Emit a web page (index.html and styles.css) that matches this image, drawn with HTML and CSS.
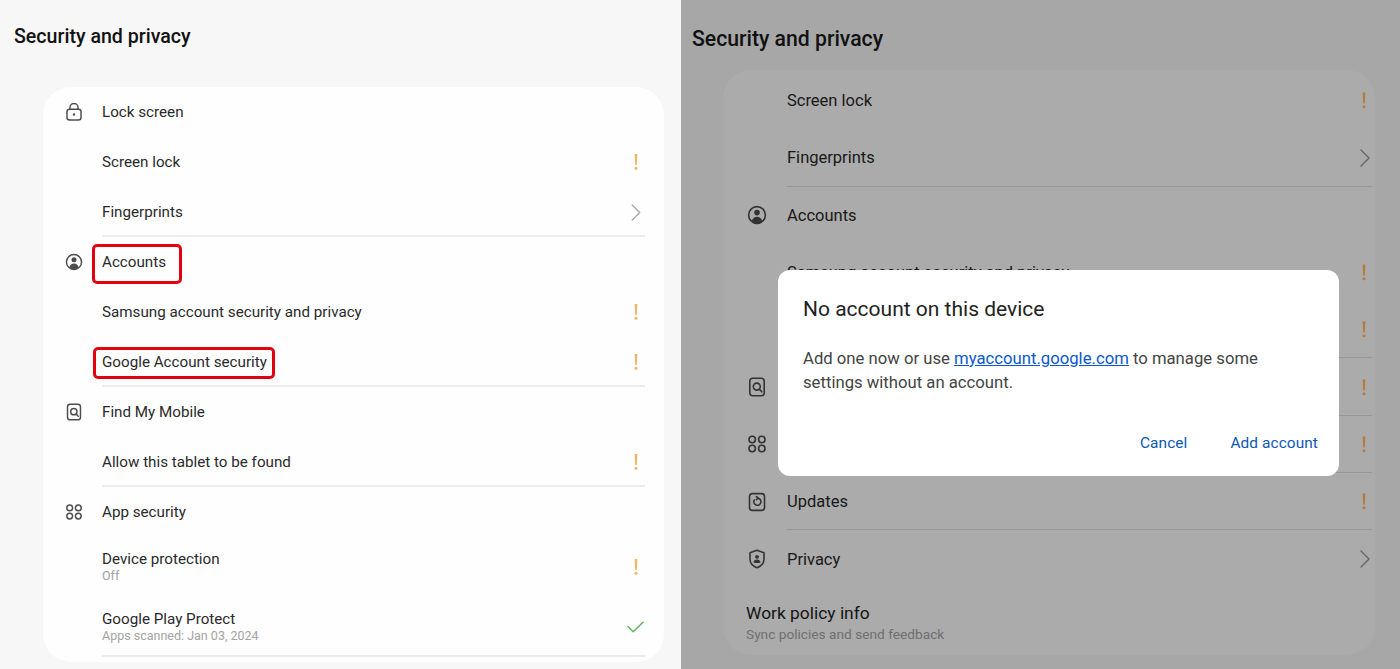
FILE: index.html
```html
<!DOCTYPE html>
<html lang="en">
  <head>
    <meta charset="UTF-8">
    <meta name="viewport" content="width=device-width, initial-scale=1.0">
    <title>Security and privacy</title>
    <link rel="stylesheet" href="styles.css">
  </head>
  <body>
    <svg class="defs" aria-hidden="true">
      <symbol id="i-lock" viewBox="0 0 20 20">
        <path d="M5.500 7V5a4.500 4.500 0 0 1 9 0v2"/>
        <rect x="2.200" y="7" width="15.600" height="11.800" rx="2.800"/>
        <circle class="fill" cx="10" cy="12.800" r="1.300"/>
      </symbol>
      <symbol id="i-account" viewBox="0 0 20 20">
        <circle cx="10" cy="10" r="8.400"/>
        <circle class="fill" cx="10" cy="7.600" r="2.800"/>
        <path class="fill" d="M4.800 16.400c.6-3 2.700-4.600 5.200-4.600s4.600 1.600 5.200 4.600a8.400 8.400 0 0 1-10.400 0z"/>
      </symbol>
      <symbol id="i-find" viewBox="0 0 20 20">
        <rect x="2.800" y="1.300" width="14.400" height="17.400" rx="3"/>
        <circle cx="9.800" cy="9.600" r="3.500"/>
        <path d="M12.400 12.200l2.400 2.600"/>
      </symbol>
      <symbol id="i-apps" viewBox="0 0 20 20">
        <circle cx="5.200" cy="5.500" r="3.200"/>
        <circle cx="14.800" cy="5.500" r="3.200"/>
        <circle cx="5.200" cy="14.500" r="3.200"/>
        <circle cx="14.800" cy="14.500" r="3.200"/>
      </symbol>
      <symbol id="i-update" viewBox="0 0 20 20">
        <rect x="2.500" y="1.600" width="15" height="16.800" rx="3"/>
        <path d="M7.200 8a3.600 3.600 0 1 0 3.400-1.900"/>
        <path d="M9.400 4.600l1.700 1.500-1.700 1.500"/>
      </symbol>
      <symbol id="i-privacy" viewBox="0 0 20 20">
        <path d="M10 1.300l7 2.500v6.400c0 3.900-3 6.900-7 8.500-4-1.600-7-4.600-7-8.500V3.800z"/>
        <circle class="fill" cx="10" cy="7.800" r="1.900"/>
        <path class="fill" d="M6.500 13.400c.3-1.800 1.800-2.800 3.500-2.800s3.200 1 3.500 2.800c-1 .7-6 .7-7 0z"/>
      </symbol>
      <symbol id="i-warn" viewBox="0 0 6 16">
        <path class="fill" d="M1.700 0h2.600l-.5 11H2.200z"/>
        <circle class="fill" cx="3" cy="14.300" r="1.500"/>
      </symbol>
      <symbol id="i-chevron" viewBox="0 0 10 18">
        <path d="M1 1l8 8-8 8"/>
      </symbol>
      <symbol id="i-check" viewBox="0 0 18 12">
        <path d="M1 5.500l5.500 5.500L17 1"/>
      </symbol>
    </svg>

    <div class="screen">
      <section class="panel light">
        <h1 class="title">Security and privacy</h1>
        <div class="card">
          <div class="row"><svg class="icon"><use href="#i-lock"/></svg><span class="label">Lock screen</span></div>
          <div class="row"><span class="label">Screen lock</span><svg class="warn"><use href="#i-warn"/></svg></div>
          <div class="row line"><span class="label">Fingerprints</span><svg class="chevron"><use href="#i-chevron"/></svg></div>
          <div class="row"><svg class="icon"><use href="#i-account"/></svg><span class="label">Accounts<i class="mark mark-accounts"></i></span></div>
          <div class="row"><span class="label">Samsung account security and privacy</span><svg class="warn"><use href="#i-warn"/></svg></div>
          <div class="row line"><span class="label">Google Account security<i class="mark mark-google"></i></span><svg class="warn"><use href="#i-warn"/></svg></div>
          <div class="row"><svg class="icon"><use href="#i-find"/></svg><span class="label">Find My Mobile</span></div>
          <div class="row line"><span class="label">Allow this tablet to be found</span><svg class="warn"><use href="#i-warn"/></svg></div>
          <div class="row"><svg class="icon"><use href="#i-apps"/></svg><span class="label">App security</span></div>
          <div class="row tall">
            <div class="label">Device protection<small class="sub">Off</small></div>
            <svg class="warn"><use href="#i-warn"/></svg>
          </div>
          <div class="row tall line">
            <div class="label">Google Play Protect<small class="sub">Apps scanned: Jan 03, 2024</small></div>
            <svg class="check"><use href="#i-check"/></svg>
          </div>
        </div>
      </section>

      <section class="panel dim">
        <h1 class="title">Security and privacy</h1>
        <div class="card">
          <div class="row"><span class="label">Screen lock</span><svg class="warn"><use href="#i-warn"/></svg></div>
          <div class="row line"><span class="label">Fingerprints</span><svg class="chevron"><use href="#i-chevron"/></svg></div>
          <div class="row"><svg class="icon"><use href="#i-account"/></svg><span class="label">Accounts</span></div>
          <div class="row"><span class="label">Samsung account security and privacy</span><svg class="warn"><use href="#i-warn"/></svg></div>
          <div class="row line"><span class="label">Google Account security</span><svg class="warn"><use href="#i-warn"/></svg></div>
          <div class="row line"><svg class="icon"><use href="#i-find"/></svg><span class="label">Find My Mobile</span><svg class="warn"><use href="#i-warn"/></svg></div>
          <div class="row line"><svg class="icon"><use href="#i-apps"/></svg><span class="label">App security</span><svg class="warn"><use href="#i-warn"/></svg></div>
          <div class="row line"><svg class="icon"><use href="#i-update"/></svg><span class="label">Updates</span><svg class="warn"><use href="#i-warn"/></svg></div>
          <div class="row"><svg class="icon"><use href="#i-privacy"/></svg><span class="label">Privacy</span><svg class="chevron"><use href="#i-chevron"/></svg></div>
          <div class="policy">
            <div class="policyname">Work policy info</div>
            <small class="sub">Sync policies and send feedback</small>
          </div>
        </div>

        <div class="dialog">
          <h2 class="dialogtitle">No account on this device</h2>
          <p class="dialogtext">Add one now or use <a class="link" href="#">myaccount.google.com</a> to manage some settings without an account.</p>
          <div class="actions">
            <span class="action">Cancel</span>
            <span class="action">Add account</span>
          </div>
        </div>
      </section>
    </div>
  </body>
</html>
```

FILE: styles.css
```css
* {
  box-sizing: border-box;
}
html, body {
  height: 100%;
}
body {
  margin: 0;
  overflow: hidden;
  font-family: Roboto, "Liberation Sans", sans-serif;
  color: #1c1c1c;
}
.defs {
  display: none;
}
.screen {
  display: flex;
  height: 669px;
}
.panel {
  position: relative;
  overflow: hidden;
}
.title {
  margin: 0;
  font-weight: 500;
  color: #111;
}
.card {
  display: flex;
  flex-direction: column;
}
.row {
  position: relative;
  display: flex;
  align-items: center;
  flex: none;
}
.row .icon {
  position: absolute;
  fill: none;
  stroke-linecap: round;
  stroke-linejoin: round;
}
.row .warn, .row .chevron, .row .check {
  margin-left: auto;
  fill: none;
  stroke-linecap: round;
  stroke-linejoin: round;
}
.fill {
  fill: currentColor;
  stroke: none;
}
.label {
  position: relative;
}
.sub {
  display: block;
}
.row.line::after {
  content: "";
  position: absolute;
  bottom: 0;
  height: 2px;
}

/* left half */
.light {
  width: 681px;
  background-color: #f7f7f7;
  padding: 25px 0 0 14px;
}
.light .title {
  font-size: 19.6px;
  line-height: 23px;
}
.light .card {
  width: 621px;
  height: 575px;
  margin: 39px 0 0 29px;
  padding: 0 19px 0 59px;
  border-radius: 28px;
  background-color: #fefefe;
}
.light .row {
  height: 50px;
  font-size: 15.2px;
  line-height: 18px;
  color: #2a2a2a;
}
.light .row.tall {
  height: 60px;
}
.light .row.line::after {
  left: 0;
  right: 0;
  background-color: #ececec;
}
.light .icon {
  left: -37px;
  width: 18px;
  height: 18px;
  stroke: #4c4c4c;
  stroke-width: 1.6;
  color: #4c4c4c;
}
.light .warn {
  width: 6px;
  height: 16px;
  margin-right: 6px;
  color: #f5b35f;
}
.light .chevron {
  width: 10px;
  height: 17px;
  margin-right: 4px;
  stroke: #a6a6a6;
  stroke-width: 1.4;
}
.light .check {
  width: 17px;
  height: 12px;
  margin-right: 1px;
  stroke: #62b566;
  stroke-width: 1.6;
}
.light .sub {
  font-size: 12.5px;
  line-height: 16px;
  color: #a3a3a3;
}
.mark {
  position: absolute;
  border: 3px solid #e3000f;
  border-radius: 5px;
}
.mark-accounts {
  left: -10px;
  top: -9px;
  width: 90px;
  height: 40px;
}
.mark-google {
  left: -9px;
  top: -6px;
  width: 182px;
  height: 32px;
}

/* right half, under the scrim */
.dim {
  width: 719px;
  background-color: #a7a7a7;
  padding: 26px 0 0 11px;
}
.dim .title {
  font-size: 21.2px;
  line-height: 25px;
}
.dim .card {
  width: 652px;
  height: 585px;
  margin: 19px 0 0 31px;
  padding: 2px 8px 0 64px;
  border-radius: 28px;
  background-color: #ababab;
}
.dim .row {
  height: 57.3px;
  font-size: 16.5px;
  color: #181818;
}
.dim .row.line::after {
  left: 0;
  right: -5px;
  height: 1px;
  background-color: #989898;
}
.dim .icon {
  left: -40px;
  width: 20px;
  height: 20px;
  stroke: #333;
  stroke-width: 1.6;
  color: #333;
}
.dim .warn {
  width: 6px;
  height: 17px;
  color: #b87a37;
}
.dim .chevron {
  width: 10px;
  height: 18px;
  margin-right: -3px;
  stroke: #666;
  stroke-width: 1.4;
}
.policy {
  margin: 14px 0 0 -41px;
}
.policyname {
  font-size: 17.4px;
  line-height: 22px;
  color: #141414;
}
.dim .sub {
  font-size: 13.7px;
  line-height: 20px;
  color: #6f6f6f;
}
.dialog {
  position: absolute;
  left: 97px;
  top: 270px;
  width: 561px;
  height: 206px;
  padding: 26px 21px 0 25px;
  border-radius: 12px;
  background-color: #fff;
}
.dialogtitle {
  margin: 0;
  font-size: 21px;
  font-weight: 400;
  line-height: 27px;
  color: #222;
}
.dialogtext {
  width: 480px;
  margin: 24px 0 0;
  font-size: 16.7px;
  line-height: 24px;
  color: #444;
}
.link {
  color: #0b57d0;
}
.actions {
  display: flex;
  justify-content: flex-end;
  gap: 43px;
  margin-top: 38px;
}
.action {
  font-size: 15.4px;
  font-weight: 400;
  letter-spacing: 0.1px;
  line-height: 20px;
  color: #0b57b8;
}
```
